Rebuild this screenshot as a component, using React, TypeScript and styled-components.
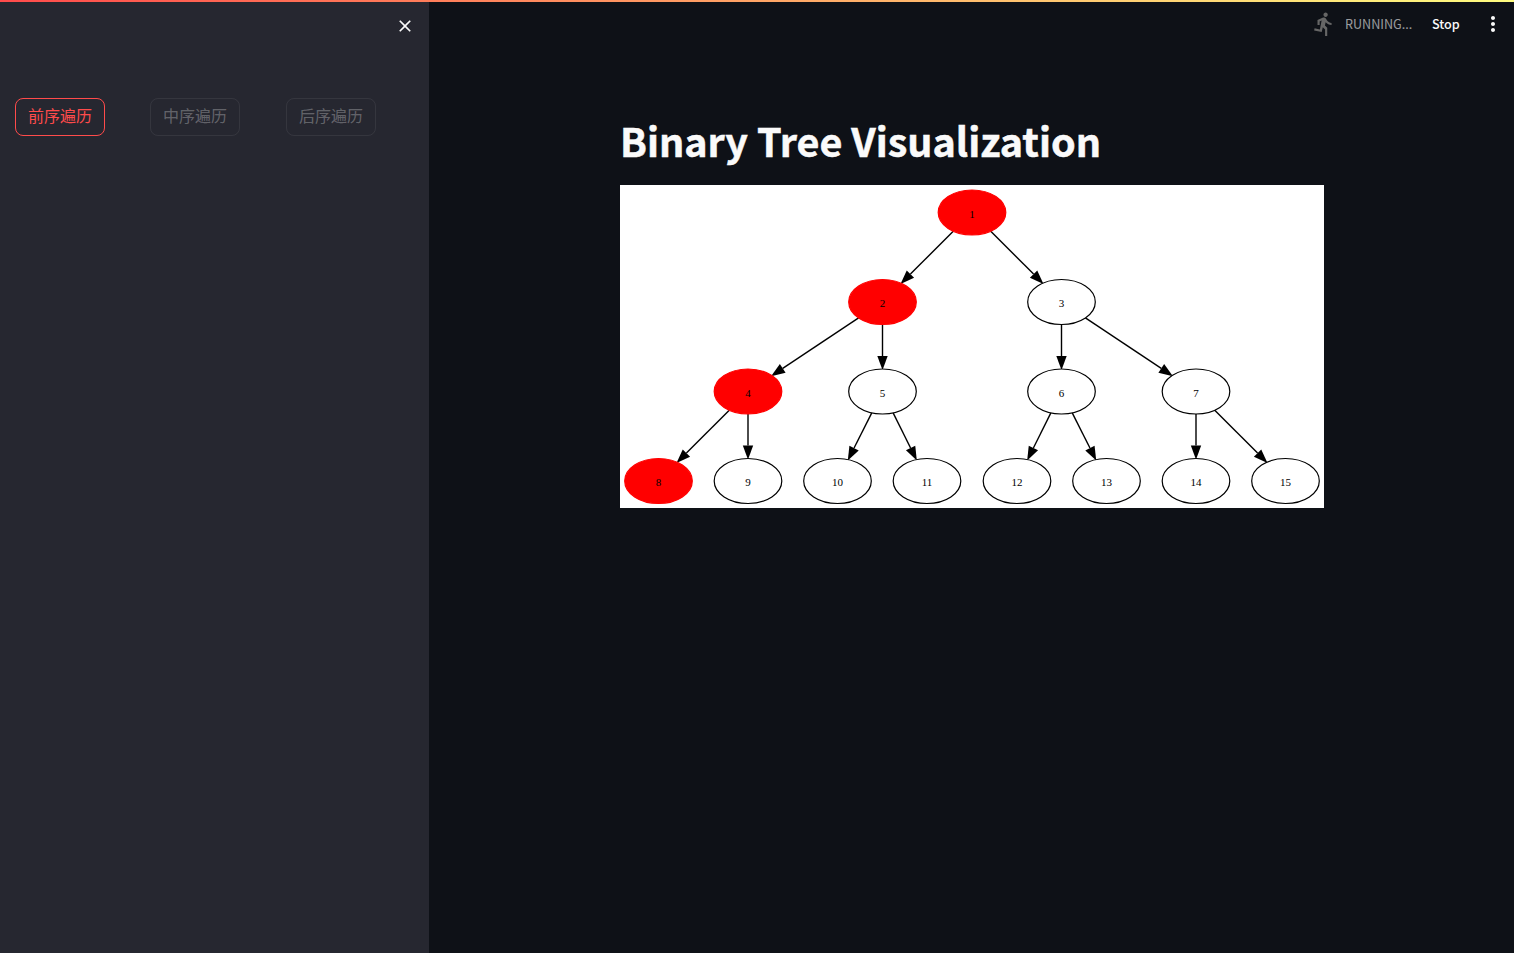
import * as React from 'react';
import styled, { createGlobalStyle } from 'styled-components';
import { MdClose, MdDirectionsRun, MdMoreVert } from 'react-icons/md';

const UI_FONT = '"Noto Sans CJK SC", "Noto Sans", sans-serif';

const RX = 33.8;
const RY = 22.5;

interface TreeNode {
  id: number;
  x: number;
  y: number;
  visited?: boolean;
}

const nodes: TreeNode[] = [
  { id: 1, x: 352, y: 27.5, visited: true },
  { id: 2, x: 262.5, y: 117, visited: true },
  { id: 3, x: 441.5, y: 117 },
  { id: 4, x: 128, y: 206.5, visited: true },
  { id: 5, x: 262.5, y: 206.5 },
  { id: 6, x: 441.5, y: 206.5 },
  { id: 7, x: 576, y: 206.5 },
  { id: 8, x: 38.5, y: 296, visited: true },
  { id: 9, x: 128, y: 296 },
  { id: 10, x: 217.5, y: 296 },
  { id: 11, x: 307, y: 296 },
  { id: 12, x: 397, y: 296 },
  { id: 13, x: 486.5, y: 296 },
  { id: 14, x: 576, y: 296 },
  { id: 15, x: 665.5, y: 296 },
];

const edges: [number, number][] = [
  [1, 2], [1, 3], [2, 4], [2, 5], [3, 6], [3, 7],
  [4, 8], [4, 9], [5, 10], [5, 11], [6, 12], [6, 13], [7, 14], [7, 15],
];

const byId = (id: number) => nodes.find(node => node.id === id) as TreeNode;

function edgeGeometry(from: TreeNode, to: TreeNode) {
  const dx = to.x - from.x;
  const dy = to.y - from.y;
  const t = 1 / Math.sqrt((dx / RX) ** 2 + (dy / RY) ** 2);
  const len = Math.sqrt(dx * dx + dy * dy);
  const ux = dx / len;
  const uy = dy / len;
  const x1 = from.x + dx * t;
  const y1 = from.y + dy * t;
  // the head touches the target's outline, so run it a pixel past the boundary
  const tipX = to.x - dx * t + ux;
  const tipY = to.y - dy * t + uy;
  const baseX = tipX - ux * 14;
  const baseY = tipY - uy * 14;
  const head = [
    [tipX, tipY],
    [baseX - uy * 5.2, baseY + ux * 5.2],
    [baseX + uy * 5.2, baseY - ux * 5.2],
  ].map(p => p.join(',')).join(' ');
  return { x1, y1, x2: baseX, y2: baseY, head };
}

const GlobalStyle = createGlobalStyle`
  html, body {
    margin: 0;
    height: 100%;
    background: #0e1117;
    overflow: hidden;
  }
  #root {
    height: 100%;
  }
`;

const Shell = styled.div`
  display: flex;
  height: 953px;
  font-family: ${UI_FONT};
  color: #fafafa;
`;

const Decoration = styled.div`
  position: fixed;
  top: 0;
  left: 0;
  right: 0;
  height: 2px;
  background: linear-gradient(90deg, #ff4b4b, #fffd80);
`;

const Sidebar = styled.aside`
  flex: 0 0 429px;
  box-sizing: border-box;
  background: #262730;
  padding: 16px 7px 0 15px;
`;

const SidebarHeader = styled.div`
  display: flex;
  justify-content: flex-end;
  height: 82px;
  padding-right: 7px;
`;

const CloseIcon = styled(MdClose)`
  display: block;
  width: 20px;
  height: 20px;
  color: #fafafa;
`;

const ButtonRow = styled.div`
  display: grid;
  grid-template-columns: 135px 136px 1fr;
`;

const TraversalButton = styled.button<{ $active?: boolean }>`
  box-sizing: border-box;
  width: 90px;
  height: 38px;
  padding: 0 0 4px;
  border-radius: 8px;
  background: transparent;
  font-family: ${UI_FONT};
  font-size: 16px;
  line-height: 24px;
  border: 1px solid ${p => (p.$active ? '#ff4b4b' : 'rgba(250, 250, 250, 0.07)')};
  color: ${p => (p.$active ? '#ff4b4b' : 'rgba(250, 250, 250, 0.3)')};
`;

const Main = styled.main`
  flex: 1;
  display: flex;
  flex-direction: column;
  min-width: 0;
`;

const Toolbar = styled.header`
  display: flex;
  align-items: center;
  justify-content: flex-end;
  height: 48px;
  padding-right: 9px;
`;

const RunIcon = styled(MdDirectionsRun)`
  width: 26px;
  height: 26px;
  margin-right: 8px;
  color: #666;
`;

const StatusText = styled.span`
  width: 67px;
  font-size: 12.6px;
  white-space: nowrap;
  color: rgba(250, 250, 250, 0.6);
  margin: 0 20px 2px 0;
`;

const StopLabel = styled.span`
  width: 27px;
  font-size: 12.6px;
  font-weight: 500;
  white-space: nowrap;
  margin: 0 22px 2px 0;
`;

const MenuIcon = styled(MdMoreVert)`
  width: 24px;
  height: 24px;
  color: #fafafa;
`;

const Content = styled.div`
  width: 704px;
  margin: 0 auto;
  padding-left: 1px;
`;

const Title = styled.h1`
  margin: 0;
  padding-top: 61px;
  height: 76px;
  font-size: 39.5px;
  font-weight: 700;
  line-height: 62px;
  color: #fafafa;
  white-space: nowrap;
  -webkit-text-stroke: 0.5px #fafafa;
`;

const Graph = styled.svg`
  display: block;
  width: 704px;
  height: 323px;
  background: #fff;
`;

export default function App() {
  return (
    <Shell>
      <GlobalStyle />
      <Decoration />
      <Sidebar>
        <SidebarHeader>
          <CloseIcon />
        </SidebarHeader>
        <ButtonRow>
          <TraversalButton $active>前序遍历</TraversalButton>
          <TraversalButton>中序遍历</TraversalButton>
          <TraversalButton>后序遍历</TraversalButton>
        </ButtonRow>
      </Sidebar>
      <Main>
        <Toolbar>
          <RunIcon />
          <StatusText>RUNNING...</StatusText>
          <StopLabel>Stop</StopLabel>
          <MenuIcon />
        </Toolbar>
        <Content>
          <Title>Binary Tree Visualization</Title>
          <Graph viewBox="0 0 704 323">
            {edges.map(([from, to]) => {
              const e = edgeGeometry(byId(from), byId(to));
              return (
                <g key={`${from}-${to}`}>
                  <line x1={e.x1} y1={e.y1} x2={e.x2} y2={e.y2} stroke="#000" strokeWidth={1.4} />
                  <polygon points={e.head} fill="#000" />
                </g>
              );
            })}
            {nodes.map(node => (
              <g key={node.id}>
                <ellipse
                  cx={node.x}
                  cy={node.y}
                  rx={RX}
                  ry={RY}
                  fill={node.visited ? '#f00' : '#fff'}
                  stroke={node.visited ? '#f00' : '#000'}
                  strokeWidth={1.2}
                />
                <text
                  x={node.x}
                  y={node.y + 5}
                  textAnchor="middle"
                  fontFamily='"Liberation Serif", serif'
                  fontSize={11}
                  fill="#000"
                >
                  {node.id}
                </text>
              </g>
            ))}
          </Graph>
        </Content>
      </Main>
    </Shell>
  );
}
